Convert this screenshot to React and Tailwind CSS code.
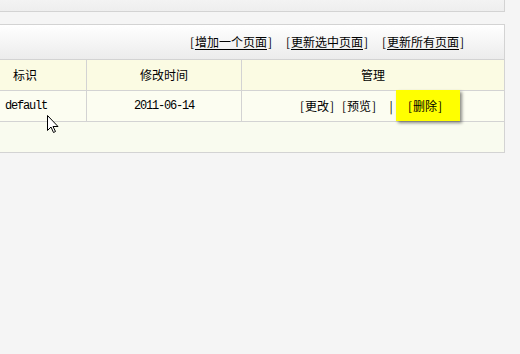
import React from "react";

const cjk = { fontFamily: '"Noto Sans CJK SC", "Liberation Sans", sans-serif' };
const mono = { fontFamily: '"Liberation Mono", monospace' };

function B({ children }) {
  return <span className="inline-block w-[6px] text-center">{children}</span>;
}

function Link({ children }) {
  return (
    <span className="whitespace-nowrap inline-flex">
      <B>[</B>
      <span className="underline underline-offset-2">{children}</span>
      <B>]</B>
    </span>
  );
}

function Br({ children }) {
  return (
    <span className="whitespace-nowrap inline-flex">
      <B>[</B>
      <span>{children}</span>
      <B>]</B>
    </span>
  );
}

export default function App() {
  return (
    <div
      className="relative w-[520px] h-[354px] bg-[#f5f5f5] text-[12px] leading-none text-black overflow-hidden"
      style={cjk}
    >
      {/* top panel */}
      <div className="w-[505px] h-[12px] bg-gradient-to-b from-[#f3f3f3] to-[#eeeeee] border-b border-r border-[#d3d3d3]" />

      {/* main panel */}
      <div className="mt-[12px] w-[505px] border-t border-r border-b border-[#d3d3d3]">
        <div className="h-[35px] flex items-center justify-end gap-[12px] pr-[39px] bg-gradient-to-b from-white to-[#ececec] border-b border-[#d3d3d3]">
          <Link>增加一个页面</Link>
          <Link>更新选中页面</Link>
          <Link>更新所有页面</Link>
        </div>

        {/* header row */}
        <div className="flex h-[31px] bg-[#fbfbe3] border-b border-[#d3d3d3]">
          <div className="w-[87px] border-r border-[#d3d3d3] flex items-center pl-[13px]">标识</div>
          <div className="w-[155px] border-r border-[#d3d3d3] flex items-center justify-center">修改时间</div>
          <div className="flex-1 flex items-center justify-center">管理</div>
        </div>

        {/* data row */}
        <div className="flex h-[31px] bg-[#fcfdf1] border-b border-[#d3d3d3]">
          <div
            className="w-[87px] border-r border-[#d3d3d3] flex items-center pl-[5px] text-[12px] tracking-[-1.2px]"
            style={mono}
          >
            default
          </div>
          <div
            className="w-[155px] border-r border-[#d3d3d3] flex items-center justify-center text-[12px] tracking-[-1.2px]"
            style={mono}
          >
            2011-06-14
          </div>
          <div className="flex-1 flex items-center pl-[57px]">
            <Br>更改</Br>
            <span className="inline-block w-[6px]" />
            <Br>预览</Br>
            <span className="ml-[12px] inline-block w-[4px] text-center">|</span>
            <div className="ml-[3px] -mt-[1px] h-[31px] w-[64px] bg-[#ffff00] flex items-center pl-[11px] shadow-[2px_2px_3px_rgba(0,0,0,0.45)]">
              <Br>删除</Br>
            </div>
          </div>
        </div>

        {/* empty row */}
        <div className="h-[30px] bg-[#f9fbef]" />
      </div>

      {/* mouse cursor */}
      <svg
        className="absolute left-[47px] top-[115px]"
        width="13"
        height="20"
        viewBox="0 0 13 20"
      >
        <path
          d="M0.5 0.5 L0.5 15.5 L4 12 L6.5 17.5 L8.5 16.5 L6 11.5 L11 11.5 Z"
          fill="white"
          stroke="black"
          strokeWidth="1"
          strokeLinejoin="miter"
        />
      </svg>
    </div>
  );
}
